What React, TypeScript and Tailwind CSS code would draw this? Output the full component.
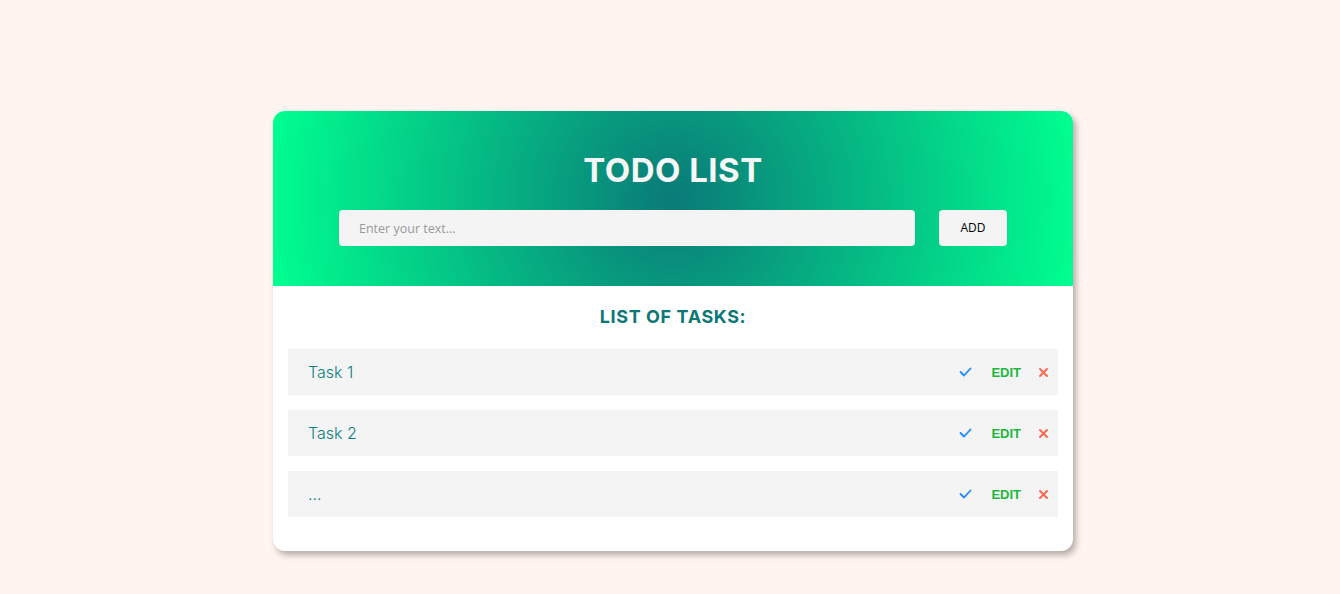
import React, { useState } from 'react';

type Task = { id: number; text: string };

export default function App() {
    const [tasks] = useState<Task[]>([
        { id: 1, text: 'Task 1' },
        { id: 2, text: 'Task 2' },
        { id: 3, text: '...' },
    ]);
    const [value, setValue] = useState<string>('');

    return (
        <div className="min-h-screen w-full bg-[#fff4ef] pl-[6px] pt-[111px]" style={{ fontFamily: 'Inter, sans-serif' }}>
            <div className="mx-auto w-[800px] overflow-hidden rounded-xl bg-white shadow-[3px_4px_6px_rgba(0,0,0,0.3)]">
                <div className="flex h-[175px] flex-col items-center bg-[radial-gradient(circle,#0a7a78_0%,#00ff90_100%)] pt-[40px]">
                    <h1 className="text-[33px] font-bold leading-[38px] tracking-[0.5px] text-[#f7f7f7]">TODO LIST</h1>
                    <div className="mt-[21px] flex items-center gap-6">
                        <input
                            value={value}
                            onChange={(e) => setValue(e.target.value)}
                            placeholder="Enter your text..."
                            className="h-9 w-[576px] rounded bg-[#f4f4f4] px-5 text-[12.5px] text-gray-700 outline-none placeholder:text-[#9a9a9a]"
                            style={{ fontFamily: '"Open Sans", sans-serif' }}
                        />
                        <button
                            className="h-9 w-[68px] rounded bg-[#f4f4f4] text-[12px] text-black"
                            style={{ fontFamily: '"Open Sans", sans-serif' }}
                        >
                            ADD
                        </button>
                    </div>
                </div>

                <div className="px-[15px] pb-[34px] pt-[20px]">
                    <h2 className="text-center text-[18px] font-bold leading-[22px] tracking-[0.6px] text-[#0b7777]">LIST OF TASKS:</h2>
                    <div className="mt-[21px] flex flex-col gap-[15px]">
                        {tasks.map((task) => (
                            <div key={task.id} className="flex h-[46px] items-center justify-between bg-[#f4f4f4] pl-5 pr-[10px]">
                                <span className="text-[16px] font-light text-[#0b7f80]">{task.text}</span>
                                <div className="flex items-center">
                                    <button className="flex items-center text-[#1e88ff]">
                                        <svg width="13" height="10" viewBox="0 0 13 10" fill="none" stroke="currentColor" strokeWidth="1.8" strokeLinecap="round" strokeLinejoin="round">
                                            <path d="M1.5 5l3.5 3.5L11.5 1.5" />
                                        </svg>
                                    </button>
                                    <button
                                        className="ml-[19px] text-[13px] font-bold leading-none text-[#1cb83c]"
                                        style={{ fontFamily: '"Liberation Sans", sans-serif' }}
                                    >
                                        EDIT
                                    </button>
                                    <button className="ml-[18px] flex items-center text-[#ff6347]">
                                        <svg width="9" height="9" viewBox="0 0 9 9" fill="none" stroke="currentColor" strokeWidth="1.8" strokeLinecap="round">
                                            <path d="M1 1l7 7M8 1L1 8" />
                                        </svg>
                                    </button>
                                </div>
                            </div>
                        ))}
                    </div>
                </div>
            </div>
        </div>
    );
}
